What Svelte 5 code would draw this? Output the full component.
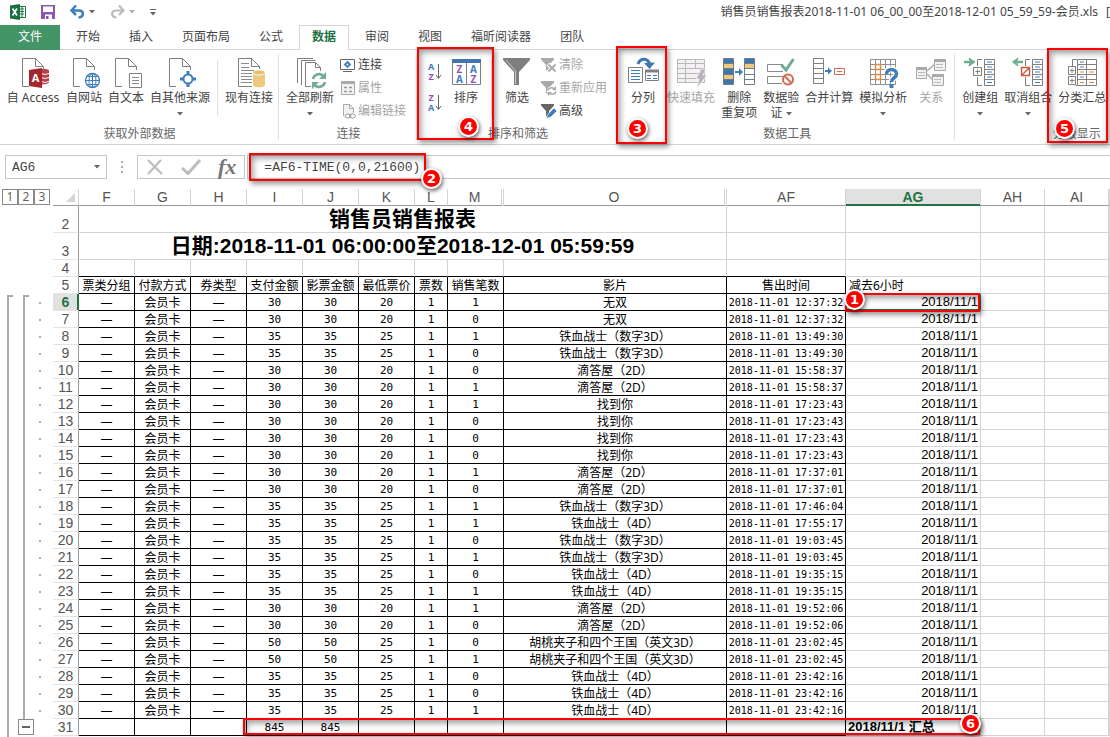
<script>
  const tabs = ['开始', '插入', '页面布局', '公式', '数据', '审阅', '视图', '福昕阅读器', '团队'];
  const columns = ['F', 'G', 'H', 'I', 'J', 'K', 'L', 'M', 'O', 'AF', 'AG', 'AH', 'AI'];
  const headings = ['票类分组', '付款方式', '券类型', '支付金额', '影票金额', '最低票价', '票数', '销售笔数', '影片', '售出时间'];

  const iron3d = '铁血战士（数字3D）';
  const iron4d = '铁血战士（4D）';
  const house = '滴答屋（2D）';
  const nut = '胡桃夹子和四个王国（英文3D）';
  const sales = [
    [30, 20, 1, '无双', '12:37:32'],
    [30, 20, 0, '无双', '12:37:32'],
    [35, 25, 1, iron3d, '13:49:30'],
    [35, 25, 0, iron3d, '13:49:30'],
    [30, 20, 0, house, '15:58:37'],
    [30, 20, 1, house, '15:58:37'],
    [30, 20, 1, '找到你', '17:23:43'],
    [30, 20, 0, '找到你', '17:23:43'],
    [30, 20, 0, '找到你', '17:23:43'],
    [30, 20, 0, '找到你', '17:23:43'],
    [30, 20, 1, house, '17:37:01'],
    [30, 20, 0, house, '17:37:01'],
    [35, 25, 1, iron3d, '17:46:04'],
    [35, 25, 1, iron4d, '17:55:17'],
    [35, 25, 0, iron3d, '19:03:45'],
    [35, 25, 1, iron3d, '19:03:45'],
    [35, 25, 0, iron4d, '19:35:15'],
    [35, 25, 1, iron4d, '19:35:15'],
    [30, 20, 1, house, '19:52:06'],
    [30, 20, 0, house, '19:52:06'],
    [50, 25, 0, nut, '23:02:45'],
    [50, 25, 1, nut, '23:02:45'],
    [35, 25, 0, iron4d, '23:42:16'],
    [35, 25, 0, iron4d, '23:42:16'],
    [35, 25, 1, iron4d, '23:42:16'],
  ].map(([paid, low, count, film, time], i) => ({ n: i + 6, paid, low, count, film, time }));

  let cellName = $state('AG6');
  let formula = $state('=AF6-TIME(0,0,21600)');
</script>

{#snippet page()}
  <path class="paper" d="M12 29.500H5.500V1.500H18.500L26.500 9.500V13M18.500 1.500V9.500H26.500" />
{/snippet}

{#snippet caret()}
  <svg class="caret" viewBox="0 0 6 4" width="6" height="4"><path d="M0 0H6L3 3.500Z" fill="#666" /></svg>
{/snippet}

{#snippet icon(name)}
  <svg class="big-icon" viewBox="0 0 32 32" width="32" height="32" aria-hidden="true">
    {#if name === 'access'}
      {@render page()}
      <path d="M22 13.500C24 11.500 31 11.500 32 13.500V25.500C31 27.500 25 28 22 27Z" fill="#b5424c" />
      <path d="M24 16.500Q28 18.500 32 16.500M24 20.500Q28 22.500 32 20.500M24 24.500Q28 26.500 32 24.500" stroke="#fff" fill="none" />
      <path d="M12 13L25 11V31L12 29Z" fill="#a4262c" />
      <text x="18.500" y="25" font-size="11" font-weight="700" fill="#fff" text-anchor="middle">A</text>
    {:else if name === 'web'}
      {@render page()}
      <circle cx="24.500" cy="23.500" r="7" fill="#fff" stroke="#3f7ebd" stroke-width="1.300" />
      <path d="M17.500 23.500H31.500M24.500 16.500V30.500M19 19.500H30M19 27.500H30" stroke="#3f7ebd" />
      <ellipse cx="24.500" cy="23.500" rx="3.500" ry="7" fill="none" stroke="#3f7ebd" />
    {:else if name === 'text'}
      {@render page()}
      <path d="M19.500 16.500H31.500V30.500H19.500Z" fill="#fff" stroke="#7f7f7f" />
      <path d="M22 20.500H29M22 23.500H29M22 26.500H29" stroke="#8a8a8a" />
    {:else if name === 'other'}
      {@render page()}
      <circle cx="24" cy="22" r="4.500" fill="#fff" stroke="#3f7ebd" stroke-width="2" />
      <path d="M24 14V18M24 26V30M16 22H20M28 22H32" stroke="#3f7ebd" stroke-width="3" />
    {:else if name === 'existing'}
      <path class="paper" d="M19 29.500H5.500V1.500H18.500L26.500 9.500V12M18.500 1.500V9.500H26.500" />
      <path d="M8 6.500H16M8 10.500H16M8 13.500H24M8 16.500H19M8 19.500H19M8 22.500H19M8 25.500H19" stroke="#8a8a8a" />
      <path d="M20 15V28C20 31 32 31 32 28V15Z" fill="#edc87e" />
      <ellipse cx="26" cy="15.500" rx="6" ry="2.500" fill="#e9bd68" stroke="#fff" />
    {:else if name === 'refresh'}
      <path class="paper" d="M3.500 26V1.500H19M7.500 28V3.500H21.500" fill="none" />
      <path class="paper" d="M17 29.500H11.500V5.500H21.500L26.500 10.500V14M21.500 5.500V10.500H26.500" />
      <path d="M19 22C20 17 27 15 30 20M31 25C30 30 23 32 20 27" fill="none" stroke="#76ab97" stroke-width="2.600" />
      <path d="M32 15V22H25ZM18 32V25H25Z" fill="#76ab97" />
    {:else if name === 'sort'}
      <path d="M2.500 4.500H30.500V27.500H2.500ZM16.500 4V27" fill="#fff" stroke="#7f7f7f" />
      <path d="M2 2H31V6H2Z" fill="#3f76ae" />
      <g font-size="10" font-weight="700" text-anchor="middle">
        <text x="9.500" y="16" fill="#8e55b5">Z</text><text x="9.500" y="26" fill="#3f7ebd">A</text>
        <text x="23.500" y="16" fill="#3f7ebd">A</text><text x="23.500" y="26" fill="#8e55b5">Z</text>
      </g>
    {:else if name === 'filter'}
      <path d="M2 1H29V3L18 15V28H13V15L2 3Z" fill="#7f7f7f" />
      <path d="M5 3L14.500 14V27" stroke="#c9c9c9" fill="none" />
    {:else if name === 'split'}
      <path d="M1.500 10.500H15.500V25.500H1.500Z" fill="#fff" stroke="#7f7f7f" />
      <path d="M4 13.500H13M4 16.500H13M4 19.500H13M4 22.500H13" stroke="#3f7ebd" />
      <path d="M18.500 13.500H31.500V23.500H18.500Z" fill="#fff" stroke="#7f7f7f" />
      <path d="M18 12.500H32V15.500H18Z" fill="#7f7f7f" />
      <path d="M20 18.500H24M26 18.500H30M20 21.500H24M26 21.500H30" stroke="#3f7ebd" />
      <path d="M11 7C13 1 21 0 23 8" fill="none" stroke="#3f76ae" stroke-width="3" />
      <path d="M17 6L22.500 12L28 5.500Z" fill="#3f76ae" />
    {:else if name === 'flash'}
      <path d="M2.500 2.500H29.500V25.500H2.500Z" fill="#f4f1f5" stroke="#b9b9b9" />
      <path d="M2 6.500H30M2 11.500H30M2 16.500H30M2 21.500H24M10.500 2V25M20.500 2V12" stroke="#b9b9b9" />
      <path d="M26 12H31L28 18H32L22 31L24 22H21Z" fill="#b9b3bd" stroke="#fff" stroke-width=".6" />
    {:else if name === 'dedupe'}
      <path d="M.5 1.500H10.500V27.500H.5ZM21.500 1.500H31.500V27.500H21.500Z" fill="#fff" stroke="#6f7b88" />
      <path d="M1 2H10V6H1ZM1 12H10V17H1ZM1 22H10V27H1ZM22 2H31V6H22Z" fill="#3f76ae" />
      <path d="M1 7H10V11H1ZM1 18H10V22H1ZM22 7H31V11H22Z" fill="#edc87e" />
      <path d="M.5 6.500H10.500M.5 11.500H10.500M.5 17.500H10.500M.5 22.500H10.500M21.500 6.500H31.500M21.500 11.500H31.500M21.500 17.500H31.500M21.500 22.500H31.500" stroke="#6f7b88" />
      <path d="M12 15H18" stroke="#3f7ebd" stroke-width="2" /><path d="M16 11L20 15L16 19Z" fill="#3f7ebd" />
    {:else if name === 'validate'}
      <path d="M18 7.500H2.500V14.500H18M18 19.500H2.500V26.500H17" fill="none" stroke="#8a8a8a" />
      <path d="M16.500 8L21 13L28.500 2" fill="none" stroke="#6fae93" stroke-width="3" />
      <circle cx="23" cy="22.500" r="5" fill="#fff" stroke="#d4694d" stroke-width="2" />
      <path d="M19.500 19L26.500 26" stroke="#d4694d" stroke-width="2" />
    {:else if name === 'consolidate'}
      <path d="M.5 1.500H10.500V26.500H.5ZM.5 6.500H10.500M.5 11.500H10.500M.5 16.500H10.500M.5 21.500H10.500" fill="#fff" stroke="#7f7f7f" />
      <path d="M12 14H17" stroke="#3f7ebd" stroke-width="2" /><path d="M15 10.500L19 14L15 17.500Z" fill="#3f7ebd" />
      <path d="M21.500 11.500H31.500V17.500H21.500ZM24 14.500H29" fill="#fff" stroke="#d4694d" />
    {:else if name === 'whatif'}
      <path d="M3.500 2.500H28.500V27.500H3.500ZM3.500 7.500H28.500M3.500 12.500H28.500M3.500 17.500H28.500M3.500 22.500H28.500M8.500 2.500V27.500M13.500 2.500V27.500M18.500 2.500V27.500M23.500 2.500V27.500" fill="#fff" stroke="#8f8f8f" />
      <path d="M8.500 7.500H13.500V12.500H8.500ZM8.500 17.500H13.500V22.500H8.500Z" fill="#fff" stroke="#e08a3c" stroke-width="1.500" />
      <path d="M19 17C19 10.500 29.500 10.500 29.500 17C29.500 21 24.500 20.500 24.500 25" fill="none" stroke="#fff" stroke-width="6" />
      <path d="M19.500 17C19.500 11 29.500 11 29.500 17C29.500 21 24.500 20.500 24.500 25" fill="none" stroke="#3f7ebd" stroke-width="3.500" />
      <path d="M22.500 27H26.500V31H22.500Z" fill="#3f7ebd" />
    {:else if name === 'relations'}
      <path d="M12 14L20 7M12 17L20 25" stroke="#aaa" stroke-width="1.500" />
      <path d="M1.500 10.500H11.500V21.500H1.500ZM19.500 2.500H30.500V13.500H19.500ZM17.500 17.500H28.500V28.500H17.500Z" fill="#f3eff4" stroke="#aaa" />
      <path d="M1 11.500H12M19 3.500H31M17 18.500H29" stroke="#aaa" stroke-width="3" />
      <path d="M3 15.500H10M3 18.500H10M21 7.500H28M21 10.500H28M19 22.500H26M19 25.500H26" stroke="#bbb" />
    {:else if name === 'group' || name === 'ungroup'}
      <path d="M20.500 2.500H30.500V28.500H20.500ZM20 7.500H31M20 12.500H31M20 17.500H31M20 22.500H31" fill="#fff" stroke="#7f7f7f" />
      <path d="M23 5H28M23 10H28M23 15H28M23 20H28M23 25.500H28" stroke="#3f7ebd" />
      <path d="M18 2.500H13.500V9M13.500 20V28.500H18" fill="none" stroke="#7f7f7f" />
      {#if name === 'group'}
        <path d="M9.500 10.500H17.500V18.500H9.500ZM11.500 14.500H16M13.500 12.500V17" fill="#fff" stroke="#7f7f7f" />
        <path d="M0 5H8" stroke="#6fae93" stroke-width="2.500" /><path d="M5 1L11 5L5 9L6.500 5Z" fill="#6fae93" stroke="#6fae93" />
      {:else}
        <path d="M9.500 10.500H17.500V18.500H9.500ZM10 18L17 11" fill="#fff" stroke="#d4553d" stroke-width="1.400" />
        <path d="M3 5H11" stroke="#6fae93" stroke-width="2.500" /><path d="M6 1L.5 5L6 9L4.500 5Z" fill="#6fae93" stroke="#6fae93" />
      {/if}
    {:else if name === 'subtotal'}
      <path d="M11.500 2.500H30.500V28.500H11.500ZM11 7.500H31M11 12.500H31M11 17.500H31M11 22.500H31M20.500 2.500V28.500" fill="#fff" stroke="#7f7f7f" />
      <path d="M2.500 9.500H9.500V17.500H2.500ZM2.500 19.500H9.500V27.500H2.500ZM4 13.500H8.500M6 11.500V16M4 23.500H8.500M6 21.500V26M6.500 9V2.500H11M9.500 28.500H11" fill="none" stroke="#7f7f7f" />
      <path d="M14 5H18M14 10H18M14 20H18" stroke="#3f7ebd" />
      <path d="M14 15H18M23 15H28M14 25.500H18M23 25.500H28" stroke="#e08a3c" />
    {/if}
  </svg>
{/snippet}

{#snippet small(name)}
  <svg viewBox="0 0 16 16" width="16" height="16" aria-hidden="true">
    {#if name === 'link'}
      <path d="M.5 2.500H14.500V12.500H.5Z" fill="#fff" stroke="#666" /><path d="M3 14.500H12" stroke="#666" />
      <path d="M7.500 5L10 7.500L7.500 10L5 7.500Z" fill="none" stroke="#3f7ebd" stroke-width="1.800" />
    {:else if name === 'props'}
      <path d="M1.500 1.500H14.500V14.500H1.500Z" fill="#f4f0f5" stroke="#aaa" /><path d="M1 2.500H15" stroke="#aaa" stroke-width="3" />
      <path d="M4 7.500H7M9 7.500H12M4 11.500H7M9 11.500H12" stroke="#999" stroke-width="1.500" />
    {:else if name === 'edit'}
      <path d="M3.500 13V1.500H9.500L13.500 5.500V10M9.500 1.500V5.500H13.500" fill="#f4f0f5" stroke="#aaa" />
      <ellipse cx="8" cy="13" rx="3" ry="2" fill="#fff" stroke="#999" /><ellipse cx="12.500" cy="13" rx="3" ry="2" fill="none" stroke="#999" />
    {:else}
      <path d="M0 1H13V2.500L8 8V15L5 13V8L0 2.500Z" fill={name === 'advanced' ? '#666' : '#a9a9a9'} />
      {#if name === 'clear'}
        <path d="M7 7L15 15M15 7L7 15" stroke="#fff" stroke-width="4" /><path d="M7.500 7.500L14.500 14.500M14.500 7.500L7.500 14.500" stroke="#a9a9a9" stroke-width="1.800" />
      {:else if name === 'reapply'}
        <circle cx="11" cy="11" r="5" fill="#fff" /><path d="M7 10.500C8 7 12 7 14 9M15 11.500C14 15 10 15 8 13" fill="none" stroke="#a9a9a9" stroke-width="1.500" />
        <path d="M15 6V10H11ZM7 16V12H11Z" fill="#a9a9a9" />
      {:else}
        <path d="M5 15.500L7 11L13 5L16 8L10 14Z" fill="#3f7ebd" stroke="#fff" stroke-width=".7" />
      {/if}
    {/if}
  </svg>
{/snippet}

{#snippet az(first, second)}
  <svg viewBox="0 0 16 20" width="16" height="20" aria-hidden="true">
    <g font-size="9" font-weight="700" text-anchor="middle">
      <text x="4" y="8" fill={first === 'A' ? '#3f7ebd' : '#8e55b5'}>{first}</text>
      <text x="4" y="18" fill={second === 'A' ? '#3f7ebd' : '#8e55b5'}>{second}</text>
    </g>
    <path d="M11.500 2V16M9 13L11.500 16.500L14 13" fill="none" stroke="#666" />
  </svg>
{/snippet}

{#snippet tool(name, lines, opts = {})}
  <button class="tool" class:off={opts.off}>
    {@render icon(name)}
    {#each lines as line, i}
      <span class="line">{line}{#if opts.inline && i === lines.length - 1}&nbsp;{@render caret()}{/if}</span>
    {/each}
    {#if opts.menu}<span class="line">{@render caret()}</span>{/if}
  </button>
{/snippet}

<div class="app">
  <header class="titlebar">
    <div class="quick">
      <svg viewBox="0 0 16 16" width="16" height="16" role="img" aria-label="Excel">
        <path d="M8.500 2.500H15.500V13.500H8.500Z" fill="#fff" stroke="#217346" /><path d="M10 5H14M10 7.500H14M10 10H14M12 3V13" stroke="#217346" />
        <path d="M0 1.500L10 0V16L0 14.500Z" fill="#1d7044" /><path d="M2.500 4.500L7 11.500M7 4.500L2.500 11.500" stroke="#fff" stroke-width="1.700" />
      </svg>
      <button aria-label="保存">
        <svg viewBox="0 0 14 14" width="14" height="14"><path d="M0 0H14V14H0Z" fill="#8a55ad" /><path d="M2 1.500H12V7H2ZM4 9.500H11V14H4Z" fill="#fff" /><path d="M5 11H7.500V14H5Z" fill="#8a55ad" /></svg>
      </button>
      <button class="split" aria-label="撤消">
        <svg viewBox="0 0 15 14" width="15" height="14"><path d="M2 5.500H9C14.500 5.500 14 12 8.500 12.500" fill="none" stroke="#3f7ebd" stroke-width="2.500" /><path d="M6 .5L1.500 5.500L6 10" fill="none" stroke="#3f7ebd" stroke-width="2.500" /></svg>
        {@render caret()}
      </button>
      <button class="split faint" aria-label="恢复">
        <svg viewBox="0 0 15 14" width="15" height="14"><path d="M13 5.500H6C.5 5.500 1 12 6.500 12.500" fill="none" stroke="#bbb" stroke-width="2.200" /><path d="M9 .5L13.500 5.500L9 10" fill="none" stroke="#bbb" stroke-width="2.200" /></svg>
        {@render caret()}
      </button>
      <button aria-label="自定义快速访问工具栏">
        <svg viewBox="0 0 6 8" width="6" height="8"><path d="M0 1.500H6" stroke="#666" /><path d="M0 4H6L3 7.500Z" fill="#666" /></svg>
      </button>
    </div>
    <div class="doc-title"><span>销售员销售报表2018-11-01 06_00_00至2018-12-01 05_59_59-会员.xls</span><span>[</span></div>
  </header>

  <nav class="tabs">
    <button class="file">文件</button>
    {#each tabs as tab}
      <button class="tab" class:active={tab === '数据'}>{tab}</button>
    {/each}
  </nav>

  <section class="ribbon">
    <div class="group">
      <div class="tools">
        <div class="wide">{@render tool('access', ['自 Access'])}</div>
        {@render tool('web', ['自网站'])}
        {@render tool('text', ['自文本'])}
        {@render tool('other', ['自其他来源'], { menu: true })}
        <i class="rule"></i>
        {@render tool('existing', ['现有连接'])}
      </div>
      <div class="caption">获取外部数据</div>
    </div>
    <div class="group">
      <div class="tools">
        {@render tool('refresh', ['全部刷新'], { menu: true })}
        <div class="stack">
          <button>{@render small('link')}连接</button>
          <button class="off">{@render small('props')}属性</button>
          <button class="off">{@render small('edit')}编辑链接</button>
        </div>
      </div>
      <div class="caption">连接</div>
    </div>
    <div class="group">
      <div class="tools">
        <div class="az">
          <button aria-label="升序">{@render az('A', 'Z')}</button>
          <button aria-label="降序">{@render az('Z', 'A')}</button>
        </div>
        {@render tool('sort', ['排序'])}
        <i class="rule"></i>
        {@render tool('filter', ['筛选'])}
        <div class="stack">
          <button class="off">{@render small('clear')}清除</button>
          <button class="off">{@render small('reapply')}重新应用</button>
          <button>{@render small('advanced')}高级</button>
        </div>
      </div>
      <div class="caption">排序和筛选</div>
    </div>
    <div class="group">
      <div class="tools">
        {@render tool('split', ['分列'])}
        {@render tool('flash', ['快速填充'], { off: true })}
        {@render tool('dedupe', ['删除', '重复项'])}
        {@render tool('validate', ['数据验', '证'], { inline: true })}
        {@render tool('consolidate', ['合并计算'])}
        {@render tool('whatif', ['模拟分析'], { menu: true })}
        {@render tool('relations', ['关系'], { off: true })}
      </div>
      <div class="caption">数据工具</div>
    </div>
    <div class="group outline-group">
      <div class="tools">
        {@render tool('group', ['创建组'], { menu: true })}
        {@render tool('ungroup', ['取消组合'], { menu: true })}
        {@render tool('subtotal', ['分类汇总'])}
      </div>
      <div class="caption">分级显示</div>
    </div>
  </section>

  <section class="formula-row">
    <div class="name-box">
      <input aria-label="名称框" bind:value={cellName} />
      {@render caret()}
    </div>
    <svg class="grip" viewBox="0 0 2 12" width="2" height="12"><path d="M0 0H2V2H0ZM0 5H2V7H0ZM0 10H2V12H0Z" fill="#aaa" /></svg>
    <div class="fx-box">
      <button aria-label="取消"><svg viewBox="0 0 18 16" width="18" height="16"><path d="M2 1L16 15M15 1L2 15" stroke="#bdbdbd" stroke-width="2.200" /></svg></button>
      <button aria-label="输入"><svg viewBox="0 0 20 16" width="20" height="16"><path d="M1 9L7 14.500L19 1" fill="none" stroke="#bdbdbd" stroke-width="3" /></svg></button>
      <button class="fx" aria-label="插入函数">fx</button>
    </div>
    <input class="formula" aria-label="编辑栏" bind:value={formula} />
  </section>

  <main class="sheet">
    <aside class="outline">
      <div class="levels"><button>1</button><button>2</button><button>3</button></div>
      <div class="brackets">
        <div class="bracket"></div>
        <div class="level-two">
          <div class="bracket"></div>
          <button class="collapse" aria-label="折叠"></button>
        </div>
        <div class="dots">{#each sales as row (row.n)}<i></i>{/each}</div>
      </div>
    </aside>

    <table>
      <colgroup>
        <col class="c-head" />
        {#each columns as c}<col class="c-{c}" />{/each}
        <col />
      </colgroup>
      <thead>
        <tr>
          <th class="corner"><svg viewBox="0 0 9 9" width="9" height="9"><path d="M9 0V9H0Z" fill="#d4d4d4" /></svg></th>
          {#each columns as c}<th class:picked={c === 'AG'} class:gap={c === 'M' || c === 'O'}>{c}</th>{/each}
          <th></th>
        </tr>
      </thead>
      <tbody>
        <tr class="tall"><th>2</th><td colspan="9" class="title">销售员销售报表</td><td></td><td></td><td></td><td></td><td></td></tr>
        <tr class="tall"><th>3</th><td colspan="9" class="title">日期:2018-11-01 06:00:00至2018-12-01 05:59:59</td><td></td><td></td><td></td><td></td><td></td></tr>
        <tr class="before"><th>4</th>{#each columns as c}<td></td>{/each}<td></td></tr>
        <tr class="lined"><th>5</th>{#each headings as h}<td>{h}</td>{/each}<td class="note">减去6小时</td><td></td><td></td><td></td></tr>
        {#each sales as row (row.n)}
          <tr class="lined">
            <th class:current={row.n === 6}>{row.n}</th>
            <td>—</td><td>会员卡</td><td>—</td>
            <td class="num">{row.paid}</td><td class="num">{row.paid}</td><td class="num">{row.low}</td>
            <td class="num">1</td><td class="num">{row.count}</td>
            <td>{row.film}</td><td class="time">2018-11-01 {row.time}</td>
            <td class="day" class:selected={row.n === 6}>2018/11/1</td><td></td><td></td><td></td>
          </tr>
        {/each}
        <tr class="lined">
          <th>31</th><td></td><td></td><td></td><td class="num">845</td><td class="num">845</td>
          <td></td><td></td><td></td><td></td><td></td><td class="sum">2018/11/1 汇总</td><td></td><td></td><td></td>
        </tr>
      </tbody>
    </table>
  </main>

  <div class="mark m1"><b>1</b></div>
  <div class="mark m2"><b>2</b></div>
  <div class="mark m3"><b>3</b></div>
  <div class="mark m4"><b>4</b></div>
  <div class="mark m5"><b>5</b></div>
  <div class="mark m6"><b>6</b></div>
</div>

<style>
  :global(body) { background: #fff; }
  .app {
    position: relative;
    height: 100vh;
    overflow: hidden;
    display: flex;
    flex-direction: column;
    color: #444;
    font: 12px/15px "Noto Sans", "Noto Sans CJK SC", sans-serif;
  }
  button, input { font: inherit; color: inherit; border: 0; padding: 0; margin: 0; background: none; }
  button { white-space: nowrap; }
  svg { display: block; flex: none; }
  .caret { display: inline-block; vertical-align: middle; }

  .titlebar { flex: none; height: 25px; display: flex; align-items: center; justify-content: space-between; padding: 0 0 2px 10px; box-sizing: border-box; }
  .quick { display: flex; align-items: center; gap: 15px; height: 22px; }
  .split { display: flex; align-items: center; gap: 4px; }
  .faint .caret { opacity: .5; }
  .doc-title { display: flex; gap: 8px; white-space: nowrap; }

  .tabs { flex: none; display: flex; height: 25px; gap: 3px; box-sizing: border-box; border-bottom: 1px solid #d4d4d4; }
  .file { width: 60px; height: 25px; padding-bottom: 2px; background: #439467; color: #fff; }
  .tab { height: 25px; padding: 0 12px 3px; border: 1px solid transparent; border-bottom: 0; }
  .tab.active { background: #fff; border-color: #d4d4d4; color: #217346; font-weight: 700; }

  .ribbon { flex: none; display: flex; height: 95px; box-sizing: border-box; border-bottom: 1px solid #d4d4d4; overflow: hidden; }
  .group { flex: none; display: flex; flex-direction: column; justify-content: space-between; padding: 3px 3px 3px 4px; }
  .group:not(:last-child) { background: linear-gradient(#e1e1e1, #e1e1e1) right center / 1px 86px no-repeat; }
  .group:first-child { padding-left: 3px; }
  .outline-group { width: 235px; }
  .tools { display: flex; align-items: flex-start; }
  .tool { display: flex; flex-direction: column; align-items: center; min-width: 42px; padding: 4px 3px 0; }
  .wide { display: flex; width: 60px; justify-content: center; }
  .big-icon { margin-bottom: 1px; }
  .line { height: 15px; line-height: 15px; }
  .off { color: #a6a6a6; }
  .rule { width: 1px; height: 56px; margin: 7px 4px 0; background: #e1e1e1; }
  .stack { display: flex; flex-direction: column; padding: 0 8px 0 3px; }
  .stack button { display: flex; align-items: center; gap: 2px; height: 23px; }
  .az { display: flex; flex-direction: column; gap: 11px; padding: 9px 2px 0 6px; }
  .caption { text-align: center; color: #666; }
  .paper { fill: #fff; stroke: #7f7f7f; }

  .formula-row { flex: none; display: flex; align-items: center; height: 44px; font-family: "Liberation Mono", monospace; font-size: 13px; padding-left: 5px; }
  .name-box { display: flex; align-items: center; justify-content: space-between; width: 102px; height: 24px; box-sizing: border-box; border: 1px solid #c6c6c6; padding: 0 6px; }
  .name-box input { width: 70px; }
  .grip { margin: 0 14px; }
  .fx-box { display: flex; align-items: center; gap: 17px; height: 24px; box-sizing: border-box; border: 1px solid #c6c6c6; padding: 0 8px; }
  .fx { font: italic 700 22px/22px "Liberation Serif", serif; color: #777; }
  .formula { flex: 1; min-width: 0; height: 24px; box-sizing: border-box; border: 1px solid #c6c6c6; border-right: 0; margin-left: 2px; padding-left: 16px; }

  .sheet { flex: 1; min-height: 0; display: flex; }
  .outline { flex: none; width: 53px; display: flex; flex-direction: column; }
  .levels { display: flex; padding-left: 2px; height: 105px; box-sizing: border-box; align-items: flex-start; }
  .levels button { width: 16px; height: 16px; border: 1px solid #888; font: 12px/14px "Noto Sans", sans-serif; color: #666; }
  .brackets { flex: 1; display: flex; padding-left: 7px; gap: 5px; }
  .bracket { width: 6px; box-sizing: border-box; border: solid #aaa; border-width: 2px 0 0 2px; margin: 1px 0 0 5px; height: 424px; }
  .brackets > .bracket { margin-left: 0; height: auto; }
  .level-two { width: 16px; }
  .collapse { display: block; width: 16px; height: 16px; border: 1px solid #888; background: linear-gradient(#666, #666) center / 8px 2px no-repeat; }
  .dots i { display: block; width: 2px; height: 17px; background: linear-gradient(#aaa, #aaa) center / 2px 2px no-repeat; }

  table { flex: 1; width: 100%; min-width: 0; table-layout: fixed; border-collapse: separate; border-spacing: 0; align-self: flex-start; }
  .c-head { width: 26px; }
  .c-F, .c-G, .c-H, .c-I, .c-J, .c-K, .c-M { width: 56px; }
  .c-L { width: 33px; }
  .c-O { width: 223px; }
  .c-AF { width: 119px; }
  .c-AG { width: 135px; }
  .c-AH, .c-AI { width: 64px; }
  th, td { box-sizing: border-box; height: 17px; padding: 0; white-space: nowrap; overflow: hidden; border: solid #d4d4d4; border-width: 0 1px 1px 0; }
  th { font: 14px/16px "Liberation Sans", sans-serif; color: #555; }
  thead th { border-bottom-color: #9b9b9b; }
  .corner svg { margin-left: 13px; }
  th.gap { border-right: 3px double #d4d4d4; }
  .picked { background: #e1e1e1; color: #217346; font-weight: 700; border-bottom-color: #217346; box-shadow: inset 0 -1px #217346; }
  tbody th { border-right-color: #9b9b9b; text-align: center; vertical-align: bottom; border-bottom-color: #e4e4e4; }
  tbody th.current { background: #e1e1e1; color: #217346; font-weight: 700; border-right-color: #217346; box-shadow: inset -1px 0 #217346; }
  td { text-align: center; color: #000; padding-top: 2px; line-height: 14px; }
  .tall td, .tall th { height: 27px; }
  .title { font: 700 21px/26px "Liberation Sans", "Noto Sans CJK SC", sans-serif; padding-top: 0; }
  .before td:nth-child(-n + 11), .lined td:nth-child(-n + 11) { border-bottom-color: #000; }
  .lined td:nth-child(-n + 11) { border-right-color: #000; }
  .num { font: 11px/14px "DejaVu Sans Mono", monospace; }
  .time { font: 10px/14px "DejaVu Sans Mono", monospace; }
  .day { font: 13px/16px "Liberation Sans", sans-serif; text-align: right; padding: 0 2px 0 0; }
  .day.selected { border-right-color: #217346; box-shadow: inset 0 0 0 1px #217346; }
  .note { text-align: left; padding-left: 3px; }
  .sum { font: 700 13px/16px "Liberation Sans", "Noto Sans CJK SC", sans-serif; text-align: left; padding: 0 0 0 2px; }

  .mark { position: absolute; box-sizing: border-box; border: 2px solid #f00; box-shadow: 2px 3px 5px rgba(0, 0, 0, .4), inset 2px 3px 6px rgba(0, 0, 0, .4); pointer-events: none; }
  .mark b { position: absolute; box-sizing: border-box; width: 21px; height: 21px; border: 2px solid #fff; border-radius: 50%; background: #f00; color: #fff; font: 700 13px/17px "DejaVu Sans", sans-serif; text-align: center; box-shadow: 1px 2px 4px rgba(0, 0, 0, .6); }
  .m1 { left: 845px; top: 293px; width: 135px; height: 19px; }
  .m1 b { left: -3px; top: -6px; }
  .m2 { left: 249px; top: 153px; width: 177px; height: 28px; }
  .m2 b { right: -18px; bottom: -10px; }
  .m3 { left: 616px; top: 46px; width: 51px; height: 98px; }
  .m3 b { left: 9px; bottom: 3px; }
  .m4 { left: 417px; top: 47px; width: 77px; height: 93px; }
  .m4 b { left: 39px; bottom: 1px; }
  .m5 { left: 1047px; top: 48px; width: 61px; height: 95px; }
  .m5 b { left: 5px; bottom: 2px; }
  .m6 { left: 243px; top: 718px; width: 737px; height: 17px; }
  .m6 b { right: -3px; top: -7px; }
</style>
